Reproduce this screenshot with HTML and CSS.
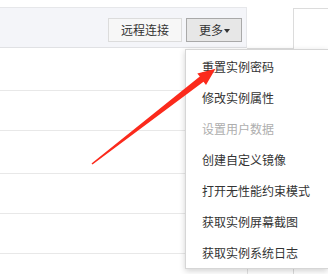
FILE: index.html
```html
<!DOCTYPE html>
<html>
<head>
<meta charset="utf-8">
<link rel="stylesheet" href="styles.css">
</head>
<body>
<div class="page">
  <div class="main">
    <div class="toolbar">
      <button class="btn">远程连接</button>
      <button class="btn btn-active">更多<span class="caret"></span></button>
    </div>
    <div class="row row-a"></div>
    <div class="row"></div>
    <div class="row row-b"></div>
    <div class="row"></div>
    <div class="row"></div>
  </div>
  <div class="gap"></div>
  <div class="side"></div>
</div>
<ul class="menu">
  <li class="item">重置实例密码</li>
  <li class="item">修改实例属性</li>
  <li class="item disabled">设置用户数据</li>
  <li class="item">创建自定义镜像</li>
  <li class="item">打开无性能约束模式</li>
  <li class="item">获取实例屏幕截图</li>
  <li class="item">获取实例系统日志</li>
</ul>
<svg class="arrow" width="328" height="274" viewBox="0 0 328 274">
  <polygon points="91.5,163.5 199.8,76.6 197.3,73.4 215.5,68.8 206,85 203.5,81.8 92.5,164.5" fill="#fb2a1c"/>
</svg>
</body>
</html>
```
FILE: styles.css
```css
html, body {
  margin: 0;
  padding: 0;
  background: #fff;
  font-family: "Noto Sans CJK SC", "Microsoft YaHei", sans-serif;
  font-size: 12px;
  color: #333;
  overflow: hidden;
}
.page {
  display: flex;
  width: 328px;
  height: 274px;
}
.main {
  width: 247px;
  flex: none;
}
.toolbar {
  margin-top: 7px;
  height: 41px;
  box-sizing: border-box;
  border-top: 1px solid #e6e7ea;
  border-bottom: 1px solid #e0e1e4;
  border-right: 1px solid #e6e7ea;
  background: #f4f5f9;
  display: flex;
  justify-content: flex-end;
  align-items: flex-start;
  gap: 4px;
  padding: 10px 4px 0 0;
}
.btn {
  height: 24px;
  box-sizing: border-box;
  border: 1px solid #dcdcdc;
  background: #f7f7f7;
  padding: 0 12px;
  font-family: inherit;
  font-size: 12px;
  line-height: 22px;
  color: #333;
  display: flex;
  align-items: center;
  margin: 0;
}
.btn-active {
  border-color: #a9a9a9;
  background: #e7e7e7;
  padding: 0 11px 0 12px;
}
.caret {
  display: inline-block;
  width: 0;
  height: 0;
  margin-left: 1px;
  margin-top: 2px;
  border-left: 3.5px solid transparent;
  border-right: 3.5px solid transparent;
  border-top: 4px solid #333;
}
.row {
  height: 40px;
  border-bottom: 1px solid #e8e8e8;
  box-sizing: border-box;
}
.row-a {
  height: 43px;
}
.row-b {
  height: 43px;
}
.gap {
  width: 46px;
  flex: none;
  margin-top: 48px;
  border-top: 1px solid #dedede;
  border-left: 1px solid #e2e2e2;
  box-sizing: border-box;
}
.side {
  flex: 1;
  margin-top: 8px;
  border-top: 1px solid #dcdcdc;
  border-left: 1px solid #dcdcdc;
}
.menu {
  position: absolute;
  left: 185px;
  top: 49px;
  width: 142px;
  margin: 0;
  padding: 1px 0 0 0;
  list-style: none;
  background: #fff;
  border: 1px solid #d6d6d6;
  border-right: none;
  box-shadow: 0 2px 6px rgba(0, 0, 0, 0.18);
}
.item {
  height: 31px;
  line-height: 31px;
  padding-left: 16px;
  color: #333;
  white-space: nowrap;
}
.item.disabled {
  color: #aeaeae;
}
.arrow {
  position: absolute;
  left: 0;
  top: 0;
  pointer-events: none;
}
```
